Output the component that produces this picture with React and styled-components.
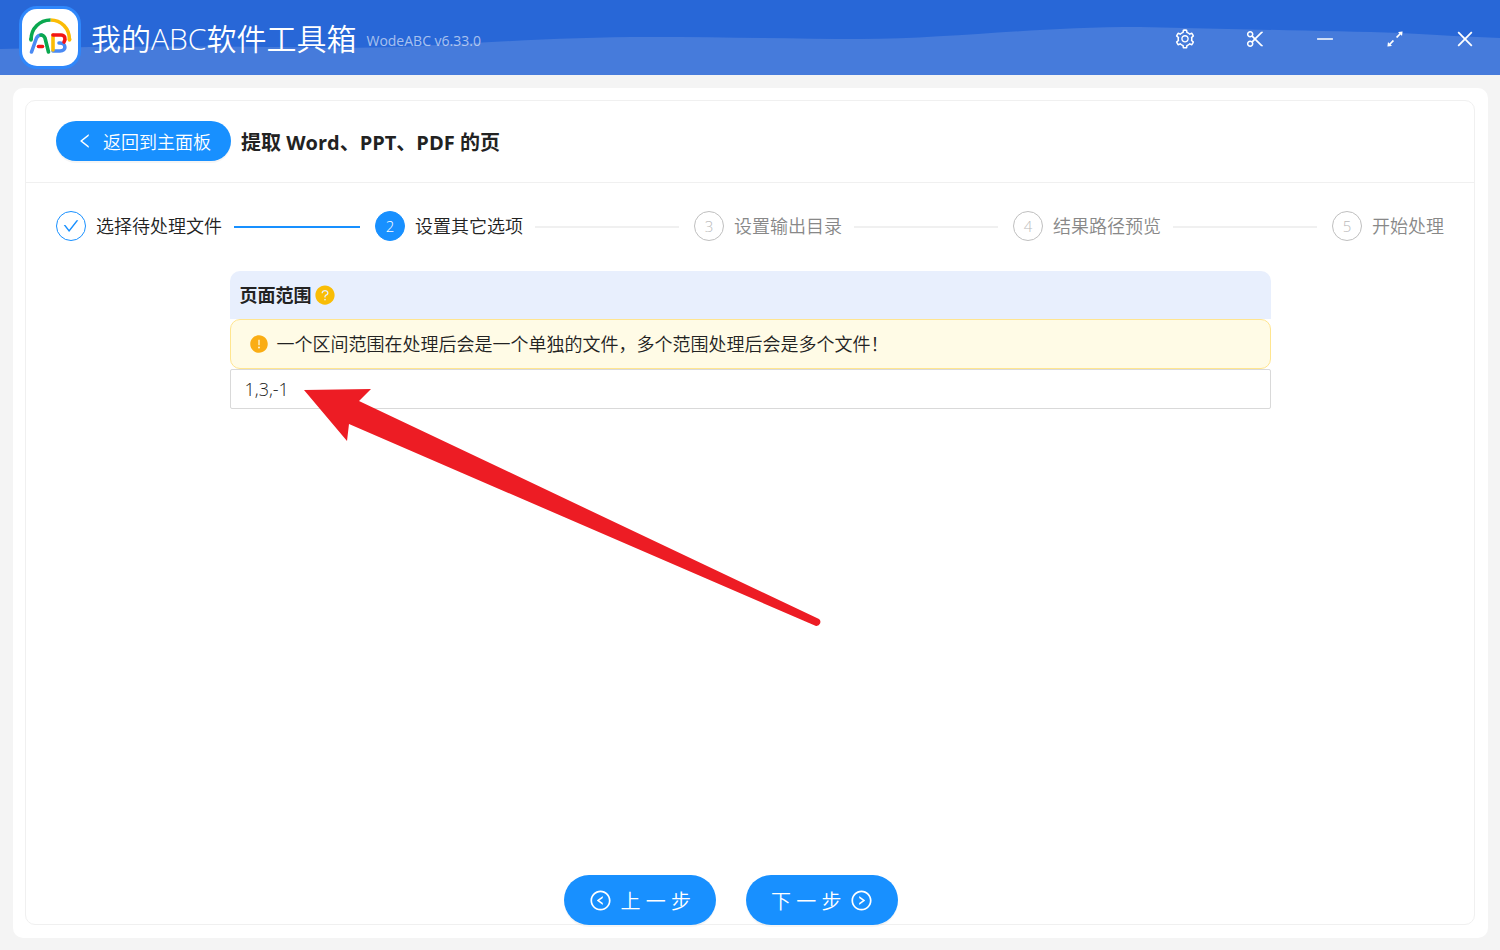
import React, { useState } from 'react';
import styled, { createGlobalStyle } from 'styled-components';
import {
  AiFillExclamationCircle,
  AiFillQuestionCircle,
  AiOutlineArrowsAlt,
  AiOutlineCheck,
  AiOutlineClose,
  AiOutlineLeft,
  AiOutlineLeftCircle,
  AiOutlineMinus,
  AiOutlineRightCircle,
  AiOutlineScissor,
  AiOutlineSetting,
} from 'react-icons/ai';

const windowActions = [
  { name: '设置', icon: <AiOutlineSetting /> },
  { name: '截图', icon: <AiOutlineScissor /> },
  { name: '最小化', icon: <AiOutlineMinus /> },
  { name: '最大化', icon: <AiOutlineArrowsAlt /> },
  { name: '关闭', icon: <AiOutlineClose /> },
];

const steps = ['选择待处理文件', '设置其它选项', '设置输出目录', '结果路径预览', '开始处理'];

const CURRENT_STEP = 1;

function stepStatus(index) {
  if (index < CURRENT_STEP) return 'finish';
  return index === CURRENT_STEP ? 'process' : 'wait';
}

function Logo() {
  return (
    <LogoBox>
      <svg viewBox="0 0 56 57" width="56" height="57" fill="none" strokeLinecap="round" strokeLinejoin="round" aria-hidden="true">
        <g strokeWidth="3.6">
          <path d="M47.5 31C47.5 19 39 11 28.500 11" stroke="#fbbc05" strokeLinecap="butt" />
          <path d="M47.500 31v-1" stroke="#fbbc05" />
          <path d="M9 31C9 19 18 11 28.500 11" stroke="#0aa84f" strokeLinecap="butt" />
          <path d="M9 31v-1" stroke="#0aa84f" />
          <path d="M31 42h7c7 0 6-8 0-8h-1" stroke="#4a8af4" />
          <path d="M31 26v15" stroke="#fbbc05" />
          <path d="M31 26h8c4 0 5 4 3 7" stroke="#f31414" />
          <path d="M9.500 43l5-14c1-2 3-3 5-3" stroke="#4a8af4" />
          <path d="M19 26c2 0 3 1 4 3l3.500 14" stroke="#0aa84f" />
          <path d="M16.500 37.500h4" stroke="#f31414" />
        </g>
      </svg>
    </LogoBox>
  );
}

function TitleBar() {
  return (
    <Bar>
      <Wave viewBox="0 0 1500 75" preserveAspectRatio="none" aria-hidden="true">
        <path d="M0 49C90 46 200 46 280 47C330 48 360 48 400 47C480 43 560 37 650 37C730 37 800 39 860 39C950 39 1030 27 1140 27C1230 29 1330 31 1400 33C1440 35 1470 37 1500 38V75H0Z" />
      </Wave>
      <Logo />
      <AppName>我的ABC软件工具箱</AppName>
      <Version>WodeABC v6.33.0</Version>
      <WindowActions>
        {windowActions.map(({ name, icon }) => (
          <WindowButton key={name} type="button" aria-label={name}>{icon}</WindowButton>
        ))}
      </WindowActions>
    </Bar>
  );
}

function App() {
  const [range, setRange] = useState('1,3,-1');

  return (
    <>
      <GlobalStyle />
      <Page>
        <TitleBar />
        <Outer>
          <Card>
            <CardHeader>
              <BackButton type="button">
                <AiOutlineLeft />
                返回到主面板
              </BackButton>
              <Title>提取 Word、PPT、PDF 的页</Title>
            </CardHeader>
            <Content>
              <Steps>
                {steps.map((label, index) => (
                  <Step key={label} $status={stepStatus(index)}>
                    <StepIcon $status={stepStatus(index)}>
                      {index < CURRENT_STEP ? <AiOutlineCheck /> : index + 1}
                    </StepIcon>
                    <span>{label}</span>
                    {index < steps.length - 1 && <StepLine $done={index < CURRENT_STEP} />}
                  </Step>
                ))}
              </Steps>
              <Form>
                <FieldHeader>
                  <label htmlFor="page-range">页面范围</label>
                  <AiFillQuestionCircle />
                </FieldHeader>
                <Notice>
                  <AiFillExclamationCircle />
                  一个区间范围在处理后会是一个单独的文件，多个范围处理后会是多个文件！
                </Notice>
                <RangeInput
                  id="page-range"
                  type="text"
                  value={range}
                  onChange={(e) => setRange(e.target.value)}
                />
                <Pointer viewBox="304 388 520 242" width="520" height="242" aria-hidden="true">
                  <path d="M304 390L371 389L359 401L819 619A4 4 0 0 1 816 626L349 424L347 441Z" />
                </Pointer>
              </Form>
            </Content>
            <Footer>
              <StepButton type="button">
                <AiOutlineLeftCircle />
                上 一 步
              </StepButton>
              <StepButton type="button">
                下 一 步
                <AiOutlineRightCircle />
              </StepButton>
            </Footer>
          </Card>
        </Outer>
      </Page>
    </>
  );
}

export default App;

const GlobalStyle = createGlobalStyle`
  * {
    box-sizing: border-box;
  }
  body {
    margin: 0;
    background-color: #f4f4f4;
  }
  body, button, input {
    font-family: "Open Sans", "Noto Sans CJK SC", sans-serif;
    font-weight: 350;
  }
  button {
    cursor: pointer;
  }
  svg {
    flex-shrink: 0;
  }
`;

const Page = styled.div`
  display: flex;
  flex-direction: column;
  min-height: 100vh;
  color: #222;
  font-size: 18px;
  line-height: 28px;
`;

const Bar = styled.header`
  position: relative;
  display: flex;
  align-items: center;
  height: 75px;
  padding-left: 19px;
  background-color: #2867d7;
  color: #fff;
  > * {
    position: relative;
  }
`;

const Wave = styled.svg`
  && {
    position: absolute;
  }
  inset: 0;
  width: 100%;
  height: 100%;
  fill: #467bdb;
`;

const LogoBox = styled.div`
  display: flex;
  border: 3px solid #2f87fb;
  border-radius: 18px;
  background-color: #2f87fb;
  svg {
    border-radius: 15px;
    background-color: #fff;
  }
`;

const AppName = styled.h1`
  margin: 0 10px;
  padding-top: 2px;
  font-size: 30px;
  font-weight: 350;
  line-height: 40px;
  white-space: nowrap;
`;

const Version = styled.span`
  padding-top: 6px;
  font-size: 14px;
  font-weight: 400;
  line-height: 20px;
  color: rgba(255, 255, 255, 0.6);
`;

const WindowActions = styled.div`
  display: flex;
  height: 100%;
  margin-left: auto;
`;

const WindowButton = styled.button`
  display: flex;
  align-items: center;
  justify-content: center;
  width: 70px;
  padding: 2px 0 0;
  border: none;
  background: none;
  color: #fff;
  font-size: 22px;
`;

const Outer = styled.main`
  display: flex;
  flex: 1;
  margin: 13px 12px 12px 13px;
  padding: 12px 13px 13px 12px;
  border-radius: 10px;
  background-color: #fff;
`;

const Card = styled.section`
  display: flex;
  flex: 1;
  flex-direction: column;
  min-width: 0;
  border: 1px solid #f0f0f0;
  border-radius: 10px;
`;

const CardHeader = styled.header`
  display: flex;
  align-items: center;
  gap: 10px;
  padding: 20px 30px 21px;
  border-bottom: 1px solid #f0f0f0;
`;

const RoundButton = styled.button`
  display: flex;
  align-items: center;
  justify-content: center;
  border: none;
  border-radius: 25px;
  background-color: #1890ff;
  box-shadow: 0 2px 0 rgba(0, 0, 0, 0.04);
  color: #fff;
  white-space: nowrap;
`;

const BackButton = styled(RoundButton)`
  gap: 9px;
  height: 40px;
  padding: 0 20px;
  font-size: 18px;
`;

const Title = styled.h2`
  margin: 0;
  padding-top: 4px;
  font-size: 20px;
  font-weight: 700;
`;

const Content = styled.div`
  flex: 1;
  padding: 28px 30px;
`;

const Steps = styled.ol`
  display: flex;
  margin: 0;
  padding: 0;
  list-style: none;
`;

const Step = styled.li`
  display: flex;
  flex: 1;
  align-items: center;
  gap: 10px;
  white-space: nowrap;
  color: ${({ $status }) => ($status === 'wait' ? '#888' : '#222')};
  &:last-child {
    flex: none;
  }
`;

const StepIcon = styled.span`
  display: flex;
  align-items: center;
  justify-content: center;
  width: 30px;
  height: 30px;
  border: 1px solid ${({ $status }) => ($status === 'wait' ? '#bfbfbf' : '#1890ff')};
  border-radius: 50%;
  background-color: ${({ $status }) => ($status === 'process' ? '#1890ff' : '#fff')};
  color: ${({ $status }) => ({ finish: '#1890ff', process: '#fff', wait: '#bbb' })[$status]};
  font-size: 15px;
  svg {
    font-size: 18px;
  }
`;

const StepLine = styled.span`
  flex: 1;
  height: 2px;
  margin: 2px 15px 0 2px;
  background-color: ${({ $done }) => ($done ? '#1890ff' : '#f0f0f0')};
`;

const Form = styled.form`
  position: relative;
  width: 75%;
  margin: 30px auto 0;
`;

const FieldHeader = styled.div`
  display: flex;
  align-items: center;
  gap: 2px;
  height: 48px;
  padding: 0 10px;
  border-radius: 10px 10px 0 0;
  background-color: #e8effd;
  font-weight: 700;
  svg {
    color: #f9bd06;
    font-size: 22px;
  }
`;

const Notice = styled.div`
  display: flex;
  align-items: center;
  gap: 8px;
  padding: 10px 18px;
  border: 1px solid #ffe58f;
  border-radius: 10px;
  background-color: #fffbe6;
  svg {
    color: #faad14;
    font-size: 20px;
  }
`;

const RangeInput = styled.input`
  display: block;
  width: 100%;
  height: 40px;
  padding: 0 14px;
  border: 1px solid #d9d9d9;
  border-radius: 2px;
  background-color: #fff;
  color: #222;
  font-size: 18px;
`;

/* red arrow laid over the form, its tip next to the range value */
const Pointer = styled.svg`
  position: absolute;
  top: 117px;
  left: 74px;
  fill: #ed1c24;
  pointer-events: none;
`;

const Footer = styled.footer`
  display: flex;
  justify-content: center;
  gap: 30px;
  margin-bottom: -1px;
  padding-right: 38px;
`;

const StepButton = styled(RoundButton)`
  gap: 9px;
  height: 50px;
  padding: 0 25px;
  font-size: 20px;
  svg {
    font-size: 23px;
  }
`;
